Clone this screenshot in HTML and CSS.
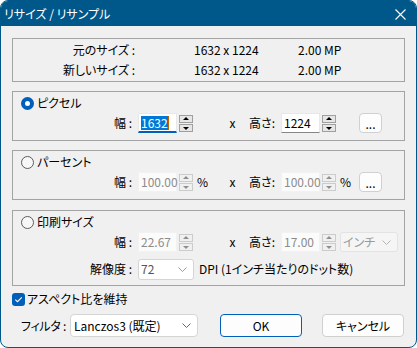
FILE: index.html
```html
<!DOCTYPE html>
<html lang="ja">
<head>
<meta charset="utf-8">
<title>リサイズ / リサンプル</title>
<link rel="stylesheet" href="styles.css">
</head>
<body>
<div class="window">
  <div class="titlebar">
    <span class="title">リサイズ / リサンプル</span>
    <svg class="close" width="11" height="11" viewBox="0 0 11 11"><path d="M0.5 0.5 L10.5 10.5 M10.5 0.5 L0.5 10.5" stroke="#fff" stroke-width="1.1" fill="none"/></svg>
  </div>
  <div class="content">
    <div class="info">
      <div class="info-row"><span class="info-label">元のサイズ :</span><span class="info-val">1632 x 1224</span><span>2.00 MP</span></div>
      <div class="info-row"><span class="info-label">新しいサイズ :</span><span class="info-val">1632 x 1224</span><span>2.00 MP</span></div>
    </div>

    <div class="group g-pixel">
      <div class="radio-row"><span class="radio checked"></span><span class="rlabel">ピクセル</span></div>
      <div class="ctl-row">
        <span class="lbl">幅 :</span>
        <span class="inp active"><span class="sel">1632</span><span class="caret"></span></span>
        <span class="spin"><span class="sb up"></span><span class="sb dn"></span></span>
        <span class="unit"></span>
        <span class="x">x</span>
        <span class="lbl2">高さ:</span>
        <span class="inp focus2">1224</span>
        <span class="spin"><span class="sb up"></span><span class="sb dn"></span></span>
        <span class="unit unit2"></span>
        <span class="dots">...</span>
      </div>
    </div>

    <div class="group g-pct">
      <div class="radio-row"><span class="radio"></span><span class="rlabel">パーセント</span></div>
      <div class="ctl-row">
        <span class="lbl">幅 :</span>
        <span class="inp dis">100.00</span>
        <span class="spin dis"><span class="sb up"></span><span class="sb dn"></span></span>
        <span class="unit">%</span>
        <span class="x">x</span>
        <span class="lbl2">高さ:</span>
        <span class="inp dis">100.00</span>
        <span class="spin dis"><span class="sb up"></span><span class="sb dn"></span></span>
        <span class="unit unit2">%</span>
        <span class="dots">...</span>
      </div>
    </div>

    <div class="group g-print">
      <div class="radio-row"><span class="radio"></span><span class="rlabel">印刷サイズ</span></div>
      <div class="ctl-row">
        <span class="lbl">幅 :</span>
        <span class="inp dis">22.67</span>
        <span class="spin dis"><span class="sb up"></span><span class="sb dn"></span></span>
        <span class="unit"></span>
        <span class="x">x</span>
        <span class="lbl2">高さ:</span>
        <span class="inp dis">17.00</span>
        <span class="spin dis"><span class="sb up"></span><span class="sb dn"></span></span>
        <span class="combo combo-unit dis">インチ<svg class="chev" width="9" height="5" viewBox="0 0 9 5"><path d="M0.5 0.5 L4.5 4.5 L8.5 0.5" stroke="#b4b4b4" fill="none"/></svg></span>
      </div>
      <div class="ctl-row row3">
        <span class="lbl">解像度 :</span>
        <span class="combo combo-dpi">72<svg class="chev" width="9" height="5" viewBox="0 0 9 5"><path d="M0.5 0.5 L4.5 4.5 L8.5 0.5" stroke="#9a9a9a" fill="none"/></svg></span>
        <span class="dpi">DPI (1インチ当たりのドット数)</span>
      </div>
    </div>

    <div class="check-row">
      <span class="check"><svg width="13" height="13" viewBox="0 0 13 13"><path d="M3.3 6.6 L5.5 8.7 L9.8 4.3" stroke="#fff" stroke-width="1.1" fill="none"/></svg></span>
      <span class="clabel">アスペクト比を維持</span>
    </div>

    <div class="filter-row">
      <span class="flabel">フィルタ :</span>
      <span class="combo combo-filter">Lanczos3 (既定)<svg class="chev" width="9" height="5" viewBox="0 0 9 5"><path d="M0.5 0.5 L4.5 4.5 L8.5 0.5" stroke="#666" fill="none"/></svg></span>
      <span class="btn btn-ok">OK</span>
      <span class="btn btn-cancel">キャンセル</span>
    </div>
  </div>
</div>
</body>
</html>
```
FILE: styles.css
```css
html, body {
  margin: 0;
  padding: 0;
  background: #ffffff;
}
body {
  font-family: "Noto Sans CJK JP", "Noto Sans", sans-serif;
  font-feature-settings: "palt";
  font-size: 12px;
  line-height: 16px;
  color: #000;
}
.window {
  width: 417px;
  height: 348px;
  box-sizing: border-box;
  border: 1px solid #00588a;
  border-radius: 8px;
  background: #f0f0f0;
  overflow: hidden;
}
.titlebar {
  height: 25px;
  background: #00588a;
  display: flex;
  align-items: center;
  justify-content: space-between;
  padding: 0 10px 0 3px;
  color: #fff;
}
.title {
  font-size: 12px;
  margin-top: 1px;
}
.close {
  display: block;
  margin-top: 1px;
}
.content {
  padding: 12px 11px 0 11px;
}
.info {
  height: 44px;
  box-sizing: border-box;
  border: 1px solid #a3a3a3;
  padding-top: 1px;
}
.info-row {
  display: flex;
  align-items: center;
  height: 20px;
}
.info-label {
  width: 122px;
  text-align: right;
}
.info-val {
  margin-left: 59px;
  width: 104px;
}
.group {
  border: 1px solid #a3a3a3;
  padding: 1px 0 7px 0;
  margin-top: 9px;
}
.g-print {
  margin-top: 10px;
  padding-bottom: 6px;
}
.radio-row {
  display: flex;
  align-items: center;
  height: 20px;
}
.radio {
  width: 13px;
  height: 13px;
  box-sizing: border-box;
  border-radius: 50%;
  border: 1px solid #5c5c5c;
  background: #f7f7f7;
  margin-left: 8px;
}
.radio.checked {
  border: 4px solid #005fb8;
  background: #fff;
}
.rlabel {
  margin-left: 3px;
}
.ctl-row {
  display: flex;
  align-items: center;
  height: 20px;
}
.row3 {
  margin-top: 7px;
}
.lbl {
  width: 119px;
  text-align: right;
}
.inp {
  margin-left: 6px;
  width: 39px;
  height: 20px;
  box-sizing: border-box;
  background: #fff;
  border: 1px solid #e8e8e8;
  border-bottom-color: #868686;
  display: flex;
  align-items: center;
  padding-left: 2px;
}
.inp.active {
  border-bottom: 2px solid #005fb8;
}
.sel {
  background: #0078d7;
  color: #fff;
  line-height: 14px;
}
.caret {
  width: 1px;
  height: 14px;
  background: #c06000;
}
.inp.dis {
  background: #fbfbfb;
  border-color: #f2f2f2;
  color: #8c8c8c;
}
.spin {
  margin-left: 2px;
  width: 14px;
  height: 17px;
  display: flex;
  flex-direction: column;
  justify-content: space-between;
}
.sb {
  height: 8px;
  box-sizing: border-box;
  border: 1px solid #9f9f9f;
  background: #e6e6e6;
  position: relative;
}
.sb::after {
  content: "";
  position: absolute;
  left: 3px;
  width: 0;
  height: 0;
  border-left: 3px solid transparent;
  border-right: 3px solid transparent;
}
.sb.up::after {
  top: 1px;
  border-bottom: 3px solid #000;
}
.sb.dn::after {
  top: 2px;
  border-top: 3px solid #000;
}
.spin.dis .sb {
  border-color: #cccccc;
  background: #f0f0f0;
}
.spin.dis .sb.up::after {
  border-bottom-color: #8f8f8f;
}
.spin.dis .sb.dn::after {
  border-top-color: #8f8f8f;
}
.unit {
  width: 26px;
  padding-left: 4px;
  box-sizing: border-box;
}
.unit2 {
  width: 23px;
}
.x {
  width: 19px;
  text-align: center;
  margin-left: 4px;
}
.lbl2 {
  width: 33px;
  text-align: right;
}
.dots {
  width: 23px;
  height: 20px;
  box-sizing: border-box;
  border: 1px solid #d0d0d0;
  border-radius: 4px;
  background: #fdfdfd;
  text-align: center;
  line-height: 20px;
}
.combo {
  height: 20px;
  box-sizing: border-box;
  border: 1px solid #d5d5d5;
  border-radius: 3px;
  background: #fff;
  display: flex;
  align-items: center;
  justify-content: space-between;
  padding: 0 6px 0 2px;
  white-space: nowrap;
}
.combo-unit {
  margin-left: 4px;
  width: 58px;
}
.combo.dis {
  background: #f5f5f5;
  border-color: #e3e3e3;
  color: #9a9a9a;
}
.combo-dpi {
  margin-left: 6px;
  width: 56px;
  height: 21px;
  color: #555;
}
.dpi {
  margin-left: 5px;
}
.chev {
  display: block;
}
.check-row {
  display: flex;
  align-items: center;
  height: 16px;
  margin-top: 5px;
}
.check {
  width: 13px;
  height: 13px;
  border-radius: 3px;
  background: #005fb8;
  display: flex;
}
.clabel {
  margin-left: 2px;
}
.filter-row {
  display: flex;
  align-items: center;
  height: 23px;
  margin-top: 7px;
}
.flabel {
  margin-left: 9px;
  white-space: nowrap;
  letter-spacing: -0.3px;
}
.combo-filter {
  margin-left: 4px;
  width: 128px;
  height: 23px;
  border-radius: 4px;
  padding: 0 6px 0 3px;
}
.btn {
  width: 82px;
  height: 23px;
  box-sizing: border-box;
  border-radius: 4px;
  background: #fdfdfd;
  border: 1px solid #d0d0d0;
  display: flex;
  align-items: center;
  justify-content: center;
}
.btn-ok {
  margin-left: auto;
  border-color: #005fb8;
}
.btn-cancel {
  margin-left: 20px;
  margin-right: 1px;
}
```
